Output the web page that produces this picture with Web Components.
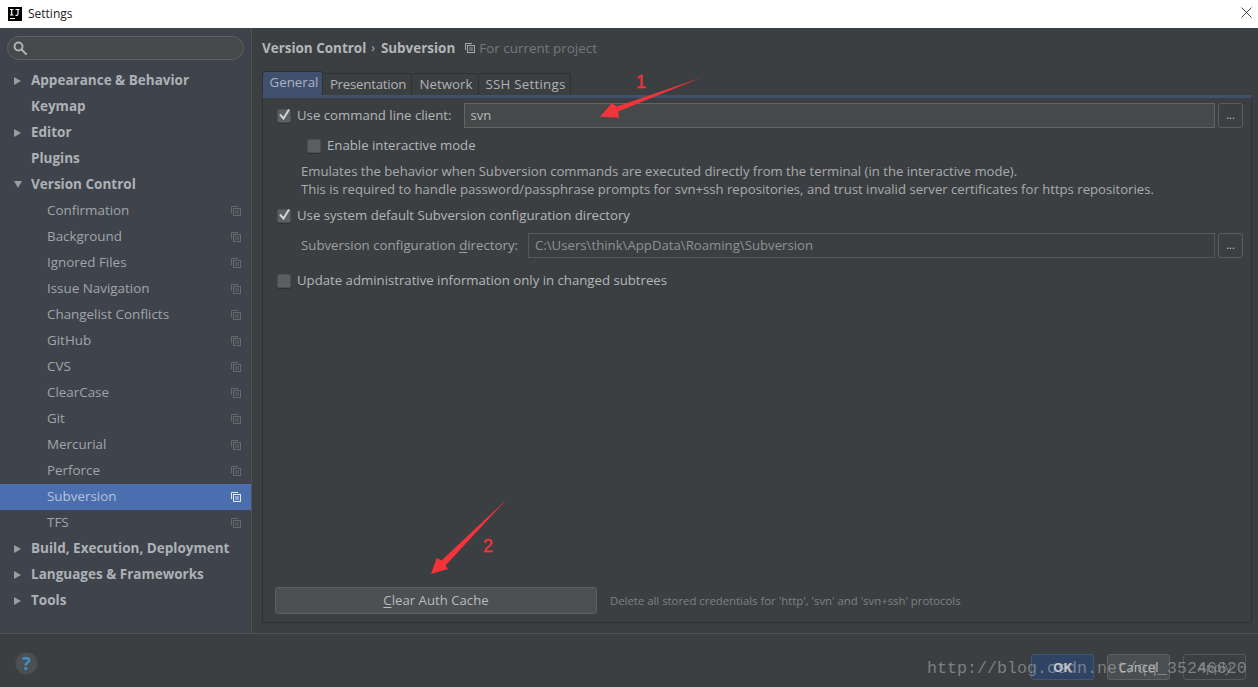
<!DOCTYPE html>
<html>
<head>
<meta charset="utf-8">
<title>Settings</title>
<style>
html, body { margin: 0; padding: 0; height: 100%; overflow: hidden; background: #3c3f41; }
body { font: 13.5px "Open Sans", "Noto Sans", sans-serif; color: #bbbbbb; }
</style>
</head>
<body>
<settings-dialog></settings-dialog>
<script>
const SHARE_ICON = `<svg width="10" height="10" viewBox="0 0 10 10" fill="none" stroke="currentColor" stroke-width="1"><path d="M.5 7V.5H7"/><rect x="2.500" y="2.500" width="7" height="7"/><path d="M4 5h4M4 7h4" stroke-width=".9"/></svg>`;

class TitleBar extends HTMLElement {
    constructor() {
        super();
        this.attachShadow({ mode: "open" }).innerHTML = `
            <style>
            :host { display: flex; align-items: center; height: 28px; background: #fff; color: #222; font: 12px "Open Sans", sans-serif; }
            .logo { width: 14px; height: 14px; background: #000; margin: 0 6px 1px 8px; }
            .logo svg { display: block; }
            .title { flex: 1; padding-bottom: 2px; }
            .close { width: 11px; height: 11px; margin: 0 6px 4px 0; }
            </style>
            <div class="logo"><svg width="14" height="14" viewBox="0 0 14 14" fill="none" stroke="#fff" stroke-width="1.2"><path d="M2 2.500h3.500M3.700 2.500V8M2 8h3.500M7.500 2.500h4M10 2.500v4.200q0 1.600-1.400 1.600H7.500M2 11.500h5"/></svg></div>
            <div class="title">Settings</div>
            <svg class="close" viewBox="0 0 11 11" stroke="#333" stroke-width=".9"><path d="M.5.500l10 10M10.500.500l-10 10"/></svg>
        `;
    }
}
customElements.define("title-bar", TitleBar);

class TreeRow extends HTMLElement {
    constructor() {
        super();
        const kind = this.getAttribute("kind") || "top";
        const arrow = this.getAttribute("arrow");
        let arrowSvg = "";
        if (arrow === "right") arrowSvg = `<svg width="7" height="8" viewBox="0 0 7 8"><path d="M0 0l7 4-7 4z" fill="#9a9d9f"/></svg>`;
        if (arrow === "down") arrowSvg = `<svg width="8" height="7" viewBox="0 0 8 7"><path d="M0 0h8L4 7z" fill="#9a9d9f"/></svg>`;
        this.attachShadow({ mode: "open" }).innerHTML = `
            <style>
            :host { display: flex; align-items: center; height: 26px; position: relative; }
            :host([kind="top"]) { font-weight: 700; color: #adb2b6; padding-left: 31px; font-size: 13.5px; }
            :host([kind="sub"]) { color: #a0a6aa; padding-left: 47px; font-size: 13.4px; }
            :host([selected]) { background: #4b6eaf; color: #b7c4d8; }
            .arrow { position: absolute; left: 14px; top: 9px; display: flex; }
            .label { flex: 1; padding-bottom: 2px; }
            .share { margin-right: 10px; color: #666a6d; display: flex; }
            :host([selected]) .share { color: #e4e8ef; }
            </style>
            <span class="arrow">${arrowSvg}</span>
            <span class="label"><slot></slot></span>
            ${kind === "sub" ? `<span class="share">${SHARE_ICON}</span>` : ""}
        `;
    }
}
customElements.define("tree-row", TreeRow);

class SearchBox extends HTMLElement {
    constructor() {
        super();
        this.attachShadow({ mode: "open" }).innerHTML = `
            <style>
            :host { display: flex; align-items: center; box-sizing: border-box; height: 24px; margin: 8px 7px 8px 7px; padding-left: 5px; background: #45494a; border: 1px solid #5f6264; border-radius: 12px; }
            svg { display: block; }
            </style>
            <svg width="14" height="14" viewBox="0 0 14 14" fill="none" stroke="#b0b3b5" stroke-width="2"><circle cx="5.500" cy="5.500" r="4"/><path d="M8.500 8.500l4.500 4.500" stroke-linecap="round"/></svg>
        `;
    }
}
customElements.define("search-box", SearchBox);

class SettingsSidebar extends HTMLElement {
    constructor() {
        super();
        this.attachShadow({ mode: "open" }).innerHTML = `
            <style>
            :host { display: block; width: 251px; box-sizing: content-box; background: #3f434c; border-right: 1px solid #505355; }
            </style>
            <search-box></search-box>
            <tree-row kind="top" arrow="right">Appearance &amp; Behavior</tree-row>
            <tree-row kind="top">Keymap</tree-row>
            <tree-row kind="top" arrow="right">Editor</tree-row>
            <tree-row kind="top">Plugins</tree-row>
            <tree-row kind="top" arrow="down">Version Control</tree-row>
            <tree-row kind="sub">Confirmation</tree-row>
            <tree-row kind="sub">Background</tree-row>
            <tree-row kind="sub">Ignored Files</tree-row>
            <tree-row kind="sub">Issue Navigation</tree-row>
            <tree-row kind="sub">Changelist Conflicts</tree-row>
            <tree-row kind="sub">GitHub</tree-row>
            <tree-row kind="sub">CVS</tree-row>
            <tree-row kind="sub">ClearCase</tree-row>
            <tree-row kind="sub">Git</tree-row>
            <tree-row kind="sub">Mercurial</tree-row>
            <tree-row kind="sub">Perforce</tree-row>
            <tree-row kind="sub" selected>Subversion</tree-row>
            <tree-row kind="sub">TFS</tree-row>
            <tree-row kind="top" arrow="right">Build, Execution, Deployment</tree-row>
            <tree-row kind="top" arrow="right">Languages &amp; Frameworks</tree-row>
            <tree-row kind="top" arrow="right">Tools</tree-row>
        `;
    }
}
customElements.define("settings-sidebar", SettingsSidebar);

class CheckRow extends HTMLElement {
    constructor() {
        super();
        const checked = this.hasAttribute("checked");
        this.attachShadow({ mode: "open" }).innerHTML = `
            <style>
            :host { display: flex; align-items: center; gap: 6px; color: #b4b6b8; font-size: 13.2px; }
            .box { width: 14px; height: 14px; box-sizing: border-box; border-radius: 2px; background: #5c5f61; border: 1px solid #4c4f51; box-shadow: 0 1px 0 #2f3133; position: relative; flex: none; }
            svg { position: absolute; left: -1px; top: -3px; }
            .text { padding-bottom: 2px; }
            </style>
            <span class="box">${checked ? `<svg width="15" height="15" viewBox="0 0 15 15" fill="none" stroke="#d0d1d2" stroke-width="2"><path d="M3 7.500l3.500 4L12 2.500"/></svg>` : ""}</span>
            <span class="text"><slot></slot></span>
        `;
    }
}
customElements.define("check-row", CheckRow);

class PathField extends HTMLElement {
    constructor() {
        super();
        this.attachShadow({ mode: "open" }).innerHTML = `
            <style>
            :host { display: flex; flex: 1; height: 25px; gap: 3px; font-size: 13px; }
            .input { flex: 1; box-sizing: border-box; border: 1px solid #646464; background: #45494a; color: #bbbbbb; padding: 0 0 1px 6px; display: flex; align-items: center; }
            :host([disabled]) .input { background: #3c3f41; border-color: #555759; color: #8f9193; font-size: 13.2px; }
            .more { width: 25px; box-sizing: border-box; border: 1px solid #5a5c5e; border-radius: 3px; color: #c8c8c8; display: flex; align-items: center; justify-content: center; font-size: 11px; padding-bottom: 3px; }
            </style>
            <div class="input"><slot></slot></div>
            <div class="more">...</div>
        `;
    }
}
customElements.define("path-field", PathField);

class TabStrip extends HTMLElement {
    constructor() {
        super();
        this.attachShadow({ mode: "open" }).innerHTML = `
            <style>
            :host { display: flex; align-items: flex-end; height: 24px; font-size: 13.3px; color: #b0b2b4; }
            div { height: 22px; box-sizing: border-box; padding: 0 0 2px 2px; display: flex; align-items: center; justify-content: center; border: 1px solid #2f3133; border-bottom: none; border-left: none; border-radius: 3px 3px 0 0; }
            .on { height: 24px; width: 61px; background: #41516d; border: 1px solid #2f3133; border-bottom: none; padding: 0 0 3px 3px; color: #aab2c0; }
            .pres { width: 89px; letter-spacing: -.25px; }
            .net { width: 67px; }
            .ssh { width: 92px; letter-spacing: .25px; }
            </style>
            <div class="on">General</div>
            <div class="pres">Presentation</div>
            <div class="net">Network</div>
            <div class="ssh">SSH Settings</div>
        `;
    }
}
customElements.define("tab-strip", TabStrip);

class SubversionPanel extends HTMLElement {
    constructor() {
        super();
        this.attachShadow({ mode: "open" }).innerHTML = `
            <style>
            :host { display: flex; flex-direction: column; flex: 1; box-sizing: border-box; border: 1px solid #2f3133; border-top: 3px solid #41516d; margin-right: 6px; }
            .row { display: flex; align-items: center; }
            .cmd { margin: 5px 8px 0 14px; gap: 12px; }
            .inter { margin: 5px 0 0 44px; height: 25px; }
            .desc { margin: 4px 0 0 38px; line-height: 18px; font-size: 13.13px; color: #a9abad; white-space: nowrap; }
            .sysdef { margin: 9px 0 0 14px; height: 18px; }
            .conf { margin: 8px 8px 0 38px; gap: 10px; font-size: 13.25px; color: #9da0a2; }
            .conf > span { padding-bottom: 1px; }
            .upd { margin: 13px 0 0 14px; height: 20px; }
            .spacer { flex: 1; }
            .bottom { margin: 0 0 8px 12px; gap: 13px; }
            .clear { width: 322px; height: 27px; box-sizing: border-box; background: #4c5052; border: 1px solid #5e6163; border-radius: 3px; display: flex; align-items: center; justify-content: center; color: #bbbbbb; font-size: 13.2px; padding-bottom: 2px; }
            .hint { font-size: 11.35px; color: #7e8183; padding-bottom: 1px; }
            u { text-underline-offset: 2px; }
            </style>
            <div class="row cmd">
                <check-row checked>Use command line client:</check-row>
                <path-field>svn</path-field>
            </div>
            <check-row class="inter">Enable interactive mode</check-row>
            <div class="desc">Emulates the behavior when Subversion commands are executed directly from the terminal (in the interactive mode).<br>This is required to handle password/passphrase prompts for svn+ssh repositories, and trust invalid server certificates for https repositories.</div>
            <check-row checked class="sysdef">Use system default Subversion configuration directory</check-row>
            <div class="row conf">
                <span>Subversion configuration <u>d</u>irectory:</span>
                <path-field disabled>C:\\Users\\think\\AppData\\Roaming\\Subversion</path-field>
            </div>
            <check-row class="upd">Update administrative information only in changed subtrees</check-row>
            <div class="spacer"></div>
            <div class="row bottom">
                <div class="clear"><span><u>C</u>lear Auth Cache</span></div>
                <div class="hint">Delete all stored credentials for 'http', 'svn' and 'svn+ssh' protocols</div>
            </div>
        `;
    }
}
customElements.define("subversion-panel", SubversionPanel);

class ContentPane extends HTMLElement {
    constructor() {
        super();
        this.attachShadow({ mode: "open" }).innerHTML = `
            <style>
            :host { display: flex; flex-direction: column; flex: 1; padding: 0 0 10px 10px; min-width: 0; }
            .crumb { display: flex; align-items: center; height: 43px; box-sizing: border-box; padding-bottom: 4px; font-size: 13.45px; color: #b4b6b8; }
            b { font-weight: 700; }
            .sep { margin: 0 6px 0 5px; font-size: 12px; }
            .share { display: flex; margin: 0 4px 0 10px; color: #a6a8aa; }
            .proj { color: #75787a; }
            </style>
            <div class="crumb"><b>Version Control</b><span class="sep">›</span><b>Subversion</b><span class="share">${SHARE_ICON}</span><span class="proj">For current project</span></div>
            <tab-strip></tab-strip>
            <subversion-panel></subversion-panel>
        `;
    }
}
customElements.define("content-pane", ContentPane);

class FooterBar extends HTMLElement {
    constructor() {
        super();
        this.attachShadow({ mode: "open" }).innerHTML = `
            <style>
            :host { display: flex; align-items: center; height: 54px; box-sizing: border-box; border-top: 1px solid #505355; padding: 13px 12px 0 15px; gap: 13px; font-size: 13px; }
            .help { width: 23px; height: 23px; border-radius: 50%; background: #4c5052; border: 1px solid #45494b; box-sizing: border-box; color: #3d90c8; font-weight: 700; font-size: 18px; line-height: 1; display: flex; align-items: center; justify-content: center; margin: 0 auto 8px 0; }
            .btn { width: 63px; height: 26px; box-sizing: border-box; border-radius: 3px; display: flex; align-items: center; justify-content: center; border: 1px solid #5e6163; background: #4a4e50; color: #bbbbbb; }
            .ok { background: #2f4464; border-color: #3f5878; font-weight: 700; color: #c4c8cc; }
            .off { background: transparent; border-color: #555759; color: #77797b; }
            </style>
            <div class="help">?</div>
            <div class="btn ok">OK</div>
            <div class="btn">Cancel</div>
            <div class="btn off">Apply</div>
        `;
    }
}
customElements.define("footer-bar", FooterBar);

class RedMarks extends HTMLElement {
    constructor() {
        super();
        this.attachShadow({ mode: "open" }).innerHTML = `
            <style>
            :host { position: absolute; left: 0; top: 0; width: 1258px; height: 687px; pointer-events: none; }
            svg { position: absolute; left: 0; top: 0; }
            .num { position: absolute; color: #f4343a; font: 18px "Liberation Sans", sans-serif; line-height: 20px; -webkit-text-stroke: .3px #f4343a; }
            .wm { position: absolute; left: 927px; top: 658px; color: rgba(170,172,172,.6); font: 16.67px "Liberation Mono", monospace; line-height: 22px; white-space: nowrap; }
            </style>
            <svg width="1258" height="687" fill="#f4343a">
                <path d="M701 77.700L617 106.500L611.700 103.300L600 116.700L619 117.700L618 111.500Z"/>
                <path d="M506 500L441.500 560.500L436.700 558L431 574L448 569L445.500 565.500Z"/>
            </svg>
            <span class="num" style="left:636px;top:72px">1</span>
            <span class="num" style="left:483px;top:536px">2</span>
            <span class="wm">http://blog.csdn.net/qq_35246620</span>
        `;
    }
}
customElements.define("red-marks", RedMarks);

class SettingsDialog extends HTMLElement {
    constructor() {
        super();
        this.attachShadow({ mode: "open" }).innerHTML = `
            <style>
            :host { display: flex; flex-direction: column; width: 1258px; height: 687px; position: relative; background: #3c3f41; }
            .main { display: flex; flex: 1; min-height: 0; }
            </style>
            <title-bar></title-bar>
            <div class="main">
                <settings-sidebar></settings-sidebar>
                <content-pane></content-pane>
            </div>
            <footer-bar></footer-bar>
            <red-marks></red-marks>
        `;
    }
}
customElements.define("settings-dialog", SettingsDialog);
</script>
</body>
</html>
